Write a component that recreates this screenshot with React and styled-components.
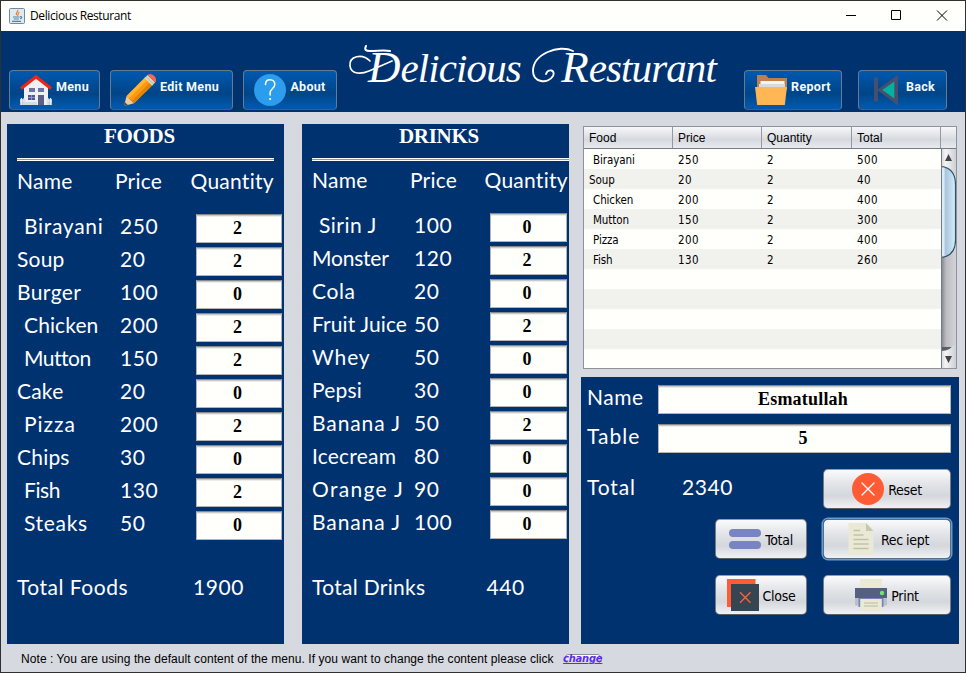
import React from "react";
import styled, { createGlobalStyle, css } from "styled-components";

const navy = "#003270";
const silver = "#d6d9df";

const Global = createGlobalStyle`
  * { box-sizing: border-box; }
  body { margin: 0; overflow: hidden; }
`;

const Window = styled.div`
  width: 966px;
  height: 673px;
  display: flex;
  flex-direction: column;
  background: ${silver};
  border: 1px solid #303030;
  font-family: "Liberation Sans", Arial, sans-serif;
  white-space: pre;
`;

const TitleBar = styled.div`
  height: 30px;
  flex: none;
  display: flex;
  align-items: center;
  padding-left: 8px;
  background: #fffffc;
`;

const WindowTitle = styled.div`
  flex: 1;
  margin-left: 5px;
  padding-bottom: 1px;
  font: 12px "Open Sans", "Noto Sans", sans-serif;
  letter-spacing: -0.4px;
  color: #000;
`;

const WindowControls = styled.div`
  display: flex;
  svg { display: block; }
`;

const Header = styled.header`
  height: 81px;
  flex: none;
  display: flex;
  align-items: flex-end;
  padding: 0 18px 2px 8px;
  background: ${navy};
`;

const NavGroup = styled.nav`
  display: flex;
  gap: ${(p) => p.$gap}px;
`;

const Brand = styled.h1`
  flex: 1;
  position: relative;
  height: 79px;
  margin: 0;
  padding-left: 31px;
  font: italic 41px/72px "Liberation Serif", "Times New Roman", serif;
  letter-spacing: -0.9px;
  color: #fff;
`;

const Initial = styled.span`
  margin-left: ${(p) => p.$before || 0}px;
  font-size: 45px;
  letter-spacing: 0;
`;

const Flourish = styled.svg`
  position: absolute;
  left: 0;
  top: 0;
  fill: none;
  stroke: #fff;
  stroke-linecap: round;
`;

const NavButton = styled.button`
  width: ${(p) => p.$w}px;
  height: 40px;
  display: flex;
  align-items: center;
  justify-content: center;
  gap: 4px;
  padding: 0;
  border: 1px solid #667b8f;
  border-bottom-color: #4c5d72;
  border-radius: 4px;
  background: linear-gradient(#0059b0, #004a93 42%, #004587 60%, #0057ab 92%);
  color: #f4f8fb;
  font: 700 12.5px/16px Roboto, sans-serif;
  letter-spacing: 0.3px;
  svg { display: block; flex: none; }
  span { padding-bottom: 6px; }
`;

const Body = styled.main`
  flex: 1;
  display: flex;
  align-items: flex-start;
  padding: 12px 6px 0;
  height: 532px;
`;

const MenuPanel = styled.section`
  width: ${(p) => p.$w}px;
  height: 520px;
  flex: none;
  margin-right: ${(p) => p.$after}px;
  padding-left: 10px;
  background: ${navy};
  color: #fff;
  font: 21px/28px Lato, sans-serif;
  overflow: hidden;
`;

const PanelHeading = styled.h2`
  height: 34px;
  margin: 0;
  padding-left: ${(p) => p.$left}px;
  font: 700 21px/25px "Liberation Serif", serif;
  letter-spacing: ${(p) => p.$track}px;
`;

const Rule = styled.div`
  width: 257px;
  height: 3px;
  border: solid #fff;
  border-width: 1px 0;
  background: #8f98a7;
`;

const Columns = styled.div`
  display: grid;
  grid-template-columns: 98px ${(p) => p.$price}px 90px;
  height: ${(p) => p.$h}px;
  padding-top: ${(p) => p.$h - 45}px;
`;

const ItemRow = styled.div`
  display: grid;
  grid-template-columns: ${(p) => p.$name}px auto ${(p) => p.$field}px;
  width: ${(p) => p.$w}px;
  height: 33px;
`;

const Label = styled.div`
  padding-left: ${(p) => p.$indent || 0}px;
  letter-spacing: ${(p) => p.$track || 0}px;
`;

const Field = styled.input`
  width: 100%;
  height: 29px;
  margin: 2px 0 0;
  padding: 0 3px 0 0;
  border: 1px solid #b4b4b4;
  border-top-color: #898989;
  border-radius: 0;
  outline: none;
  background: #fffffc;
  box-shadow: inset 0 1px 0 #c8c8c8, inset 0 2px 0 #ededeb;
  text-align: center;
  font: 700 18px "Liberation Serif", "Times New Roman", serif;
  letter-spacing: ${(p) => p.$track || 0}px;
  color: #000;
`;

const Sum = styled.div`
  display: grid;
  grid-template-columns: ${(p) => p.$split}px auto;
  padding-top: ${(p) => p.$top}px;
`;

const SidePanel = styled.div`
  width: 378px;
  padding: 2px 0 0 0;
`;

const OrderTable = styled.div`
  width: 374px;
  height: 243px;
  margin-left: 2px;
  border: 1px solid #8d939d;
  background: #fffffc;
  color: #000;
  font: 11.5px/22px "DejaVu Sans Condensed", "DejaVu Sans", sans-serif;
  font-stretch: condensed;
`;

const HeadRow = styled.div`
  display: grid;
  grid-template-columns: 89px 89px 90px 89px 15px;
  height: 22px;
  border-bottom: 1px solid #747b86;
  background: linear-gradient(#f6f7f9, #dfe1e6 45%, #d6d9df 60%, #e8eaee);
  font: 12px/23px "Liberation Sans", Arial, sans-serif;
`;

const HeadCell = styled.div`
  height: 21px;
  padding-left: 5px;
  border-right: ${(p) => (p.$last ? 0 : 1)}px solid #9398a2;
`;

const TableBody = styled.div`
  display: flex;
  height: 219px;
  overflow: hidden;
`;

const Rows = styled.div`
  width: 357px;
`;

const OrderRow = styled.div`
  display: grid;
  grid-template-columns: 89px 89px 90px 89px;
  height: 20px;
  &:nth-child(even) { background: #f1f1ee; }
`;

const Cell = styled.div`
  height: 20px;
  padding-left: ${(p) => 5 + (p.$indent || 0)}px;
  letter-spacing: ${(p) => (p.$num ? 0.4 : -0.1)}px;
`;

const ScrollBar = styled.svg`
  display: block;
`;

const Checkout = styled.section`
  width: 378px;
  height: 267px;
  margin-top: 8px;
  padding: 6px 8px 0 6px;
  background: ${navy};
  color: #fff;
  font: 21px/28px Lato, sans-serif;
`;

const FormRow = styled.div`
  display: grid;
  grid-template-columns: 71px 293px;
  height: 39px;
`;

const TotalRow = styled.div`
  display: grid;
  grid-template-columns: 95px 141px 128px;
  height: 50px;
  margin-top: 8px;
  & > div { padding-top: 4px; }
`;

const ActionRow = styled.div`
  display: flex;
  justify-content: flex-end;
  gap: 16px;
  height: 56px;
`;

const ActionButton = styled.button`
  width: ${(p) => p.$w}px;
  height: 40px;
  display: flex;
  align-items: center;
  justify-content: center;
  gap: 4px;
  padding: 0;
  border: 1px solid #777c83;
  border-top-color: #979ba2;
  border-bottom-color: #5a5d62;
  border-radius: 5px;
  background: linear-gradient(#fbfbfc, #e3e5e8 35%, #d4d7dc 68%, #f0f1f3);
  color: #000;
  font: 14px/20px "DejaVu Sans Condensed", "DejaVu Sans", sans-serif;
  font-stretch: condensed;
  letter-spacing: -0.3px;
  svg { display: block; flex: none; }
  & > span { padding-top: 2px; }
  ${(p) =>
    p.$focused &&
    css`
      border-color: #5c6f82;
      box-shadow: 0 0 0 1.5px #629cd0;
    `}
`;

const Loose = styled.span`
  letter-spacing: 3px;
`;

const Footer = styled.footer`
  height: 28px;
  display: flex;
  align-items: center;
  padding: 1px 0 0 20px;
  font-size: 12px;
  color: #000;
`;

const Note = styled.span`
  padding-top: 1px;
  letter-spacing: 0.07px;
`;

const ChangeButton = styled.button`
  width: 38px;
  height: 10px;
  margin-left: 10px;
  padding: 0;
  display: flex;
  align-items: center;
  justify-content: center;
  border: 1px solid #8b8e96;
  border-radius: 5px;
  background: linear-gradient(#fff, #d5d8de);
  color: #5a2cf0;
  font: italic 700 11px/12px "DejaVu Sans Condensed", "DejaVu Sans", sans-serif;
  font-stretch: condensed;
  letter-spacing: -0.2px;
  text-decoration: underline;
`;

const Icon = ({ children, ...rest }) => (
  <svg width="32" height="32" viewBox="0 0 32 32" {...rest}>{children}</svg>
);

const JavaIcon = () => (
  <svg width="16" height="16" viewBox="0 0 16 16">
    <rect x="0.5" y="0.5" width="15" height="15" rx="1" fill="#e1e9ef" stroke="#6c8ba2" />
    <path d="M8.7 2c1 1.8-3 2.6-1 5M10.4 4.2C8 5.2 9.8 6 8.5 7.8" fill="none" stroke="#e8822b" strokeWidth="1.2" />
    <path d="M4 9h6.5M4.8 11h5M3 13.4h9M11 8.6c2.4-.4 2.2 1.7 0 2.2" fill="none" stroke="#5481a3" strokeWidth="1.1" />
  </svg>
);

const HouseIcon = () => (
  <Icon>
    <path d="M4 13 16 3l12 10v18H4z" fill="#eef0f1" />
    <path d="M0 25h5v6H0zM27 25h5v6h-5z" fill="#b6c4d2" />
    <path d="M1.5 24v7M4 24v7M28 24v7M30.5 24v7M0 27h5M27 27h5" stroke="#e5edf2" strokeWidth="1.2" />
    <path d="M1 14.500 16 2.800l15 11.700" fill="none" stroke="#f02415" strokeWidth="3.2" />
    <path d="M9 14h6v4H9zM18 14h6v4h-6z" fill="#6b72b3" />
    <path d="M8 21h7v5H8z" fill="#4f569c" />
    <path d="M11.5 21v5M8 23.500h7" stroke="#9aa0d2" strokeWidth=".8" />
    <path d="M18 21h6v10h-6z" fill="#59608a" />
    <path d="M5 28h12v3H5z" fill="#d4dce2" />
  </Icon>
);

const PencilIcon = () => (
  <Icon>
    <path d="M0 32 2.6 22 10 29.2z" fill="#f4c999" />
    <path d="M0 32 .9 28.2 3.8 31z" fill="#3c4654" />
    <path d="M2.6 22 21 3.6l7.6 7.4L10 29.3z" fill="#ff9811" />
    <path d="M2.6 22 21 3.6l2.4 2.3L5 24.4z" fill="#ffb432" />
    <path d="m7.6 26.9 18.5-18.3 2.5 2.4L10 29.3z" fill="#e28300" />
    <path d="m20.5 4.1 3-3 7.6 7.5-3 3z" fill="#d5dfcf" />
    <path d="m22 2.6 7.6 7.4" stroke="#98aaa0" strokeWidth=".8" />
    <path d="M23.5 1.1c2-2 4.8-1 6.8.9s2.6 4.5.8 6.6z" fill="#fa684b" />
  </Icon>
);

const HelpIcon = () => (
  <Icon>
    <circle cx="16" cy="16" r="16" fill="#2c9cec" />
    <path d="M11.5 10.5c0-3 2-4.7 4.6-4.7 2.8 0 4.7 2 4.7 4.6 0 4-4.7 4.2-4.7 8.6v2" fill="none" stroke="#fff" strokeWidth="1.5" strokeLinecap="round" />
    <circle cx="16.1" cy="25" r="1.1" fill="#fff" />
  </Icon>
);

const FolderIcon = () => (
  <Icon>
    <path d="M2 1h9l2.5 3H32v12H2z" fill="#bb804d" />
    <path d="M5.5 7h24v8h-24z" fill="#f3f4f4" />
    <path d="M4 10h26v6H4z" fill="#d8dbdd" />
    <path d="M0 13h32l-2.2 18H2.2z" fill="#ffb655" />
  </Icon>
);

const BackIcon = () => (
  <Icon>
    <path d="M4 3.5h4v24H4zM28 .5v31L7 16z" fill="#464f6d" />
    <path d="M24.3 7.5v17L12.3 16z" fill="#00b3a0" />
  </Icon>
);

const ResetIcon = () => (
  <Icon>
    <circle cx="16" cy="16" r="16" fill="#ff5c36" />
    <path d="m10 10 12 12m0-12L10 22" stroke="#fff" strokeWidth="1.3" strokeLinecap="round" />
  </Icon>
);

const EqualsIcon = () => (
  <Icon>
    <rect y="6" width="32" height="8" rx="4" fill="#7984c3" />
    <rect y="18" width="32" height="8" rx="4" fill="#7984c3" />
  </Icon>
);

const DocumentIcon = () => (
  <Icon>
    <path d="M3.5 0H21l7.5 8v24h-25z" fill="#e9e9d6" />
    <path d="m21 0 7.500 8H21z" fill="#c8c7ae" />
    <path d="M8.5 7.500H15M8.500 12h10M8.500 16.500h15M8.500 21h15M8.500 25.500h15" stroke="#c3c2a4" strokeWidth="1.3" />
  </Icon>
);

const CloseIcon = () => (
  <Icon>
    <path d="M0 0h28.5v28H0z" fill="#ff5c35" />
    <path d="M4 5h28v27H4z" fill="#354551" />
    <path d="m13 13.2 10.5 10.6m0-10.6L13 23.8" stroke="#ff623b" strokeWidth="1.3" />
  </Icon>
);

const PrinterIcon = () => (
  <Icon>
    <path d="M5 0h22v10H5z" fill="#e9e9d6" />
    <path d="M0 18h4v8.5H0zM28 18h4v8.5h-4z" fill="#bac0c8" />
    <path d="M0 9h32v10H0z" fill="#555f80" />
    <path d="M3.5 19h25v9h-25z" fill="#7782bf" />
    <path d="M5.2 20h21.600v12H5.2z" fill="#e9e9d6" />
    <path d="M9 24h14M9 27h14" stroke="#bcbb9f" strokeWidth="1.1" />
    <circle cx="27" cy="14" r="2.2" fill="#70e969" />
  </Icon>
);

const foods = [
  { name: "Birayani", cost: 250, qty: 2, indent: 7, track: 0.7 },
  { name: "Soup", cost: 20, qty: 2 },
  { name: "Burger", cost: 100, qty: 0, track: 0.4 },
  { name: "Chicken", cost: 200, qty: 2, indent: 7, track: 0.1 },
  { name: "Mutton", cost: 150, qty: 2, indent: 7, track: -0.5 },
  { name: "Cake", cost: 20, qty: 0 },
  { name: "Pizza", cost: 200, qty: 2, indent: 7, track: 1 },
  { name: "Chips", cost: 30, qty: 0 },
  { name: "Fish", cost: 130, qty: 2, indent: 7, track: -0.4 },
  { name: "Steaks", cost: 50, qty: 0, indent: 7, track: 0.7 },
];

const drinks = [
  { name: "Sirin J", cost: 100, qty: 0, indent: 7, track: 0.5 },
  { name: "Monster", cost: 120, qty: 2, track: -0.2 },
  { name: "Cola", cost: 20, qty: 0, track: 0.6 },
  { name: "Fruit Juice", cost: 50, qty: 2, track: 0.1 },
  { name: "Whey", cost: 50, qty: 0, track: 0.9 },
  { name: "Pepsi", cost: 30, qty: 0 },
  { name: "Banana J", cost: 50, qty: 2, track: 0.9 },
  { name: "Icecream", cost: 80, qty: 0 },
  { name: "Orange J", cost: 90, qty: 0, track: 1.3 },
  { name: "Banana J", cost: 100, qty: 0, track: 0.9 },
];

const orders = [
  ["Birayani", 250, 2, 500, 4],
  ["Soup", 20, 2, 40],
  ["Chicken", 200, 2, 400, 4],
  ["Mutton", 150, 2, 300, 4],
  ["Pizza", 200, 2, 400, 4],
  ["Fish", 130, 2, 260, 4],
  [], [], [], [], [],
];

function MenuList({ title, track, width, after, price, nameWidth, rowWidth, field, items, headHeight, sumLabel, sumTrack, sumTop, sum, split }) {
  return (
    <MenuPanel $w={width} $after={after}>
      <PanelHeading $left={87} $track={track}>{title}</PanelHeading>
      <Rule />
      <Columns $price={price} $h={headHeight}>
        <Label $track={0.3}>Name</Label>
        <Label $track={0.2}>Price</Label>
        <Label $track={0.25}>Quantity</Label>
      </Columns>
      {items.map((item, i) => (
        <ItemRow key={i} $name={nameWidth} $w={rowWidth} $field={field}>
          <Label $indent={item.indent} $track={item.track ?? 0.2}>{item.name}</Label>
          <Label $track={0.6}>{item.cost}</Label>
          <Field defaultValue={item.qty} />
        </ItemRow>
      ))}
      <Sum $split={split} $top={sumTop}>
        <Label $track={sumTrack}>{sumLabel}</Label>
        <Label $track={0.6}>{sum}</Label>
      </Sum>
    </MenuPanel>
  );
}

function VerticalScroll() {
  return (
    <ScrollBar width="15" height="219" viewBox="0 0 15 219">
      <defs>
        <linearGradient id="track"><stop stopColor="#7d8087" /><stop offset=".35" stopColor="#bcbec3" /><stop offset="1" stopColor="#d2d3d7" /></linearGradient>
        <linearGradient id="cap"><stop stopColor="#d0d2d6" /><stop offset=".3" stopColor="#f3f4f5" /><stop offset="1" stopColor="#cdd0d5" /></linearGradient>
        <linearGradient id="thumb"><stop stopColor="#d6e9f5" /><stop offset=".2" stopColor="#dcebf7" /><stop offset=".3" stopColor="#a8c5dc" /><stop offset=".8" stopColor="#c7e1f1" /><stop offset="1" stopColor="#def2fb" /></linearGradient>
      </defs>
      <rect width="15" height="219" fill="url(#track)" />
      <path d="M0 0h15v27Q12 18 0 17z" fill="url(#cap)" />
      <path d="M0 198h11l-3 4H0z" fill="#5a5d63" />
      <path d="M0 202q10 0 15-9v26H0z" fill="url(#cap)" />
      <path d="M0 17.5Q14.5 19 14.5 36v55Q14.5 107 0 108.5z" fill="url(#thumb)" stroke="#2e5269" strokeWidth="1.2" />
      <path d="M.5 0v219" stroke="#777b82" />
      <path d="m7.500 5 3.500 7H4zM7.500 214 4 207h7z" fill="#444" />
    </ScrollBar>
  );
}

export default function App() {
  return (
    <>
      <Global />
      <Window>
        <TitleBar>
          <JavaIcon />
          <WindowTitle>Delicious Resturant</WindowTitle>
          <WindowControls>
            <svg width="120" height="30" viewBox="0 0 120 30" fill="none" stroke="#000">
              <path d="M1 14.500h10M46.500 9.500h9v9h-9zM92 9.500l10 10M102 9.500l-10 10" />
            </svg>
          </WindowControls>
        </TitleBar>
        <Header>
          <NavGroup $gap={10}>
            <NavButton $w={91}><HouseIcon /><span>Menu</span></NavButton>
            <NavButton $w={123}><PencilIcon /><span>Edit Menu</span></NavButton>
            <NavButton $w={94}><HelpIcon /><span>About</span></NavButton>
          </NavGroup>
          <Brand>
            <Initial>D</Initial>elicious <Initial $before={31}>R</Initial>esturant
            <Flourish width="400" height="79" viewBox="0 0 400 79">
              <path d="M29 15c-2 4 0 5 4 5 8 0 14-1 20 0" strokeWidth="2" />
              <path d="M33 30c-8-8-21-5-20 5 1 9 12 8 19 5l23-10" strokeWidth="1.7" />
              <path d="M236 20c-14-7-40 3-40 20 0 12 15 13 20 5 3-6-5-8-7-2" strokeWidth="1.9" />
            </Flourish>
          </Brand>
          <NavGroup $gap={16}>
            <NavButton $w={98}><FolderIcon /><span>Report</span></NavButton>
            <NavButton $w={89}><BackIcon /><span>Back</span></NavButton>
          </NavGroup>
        </Header>
        <Body>
          <MenuList title="FOODS" track={-0.3} width={277} after={18} price={75.5} nameWidth={103} rowWidth={265} field={86}
            items={foods} headHeight={51} sumLabel="Total Foods" sumTrack={0.5} sumTop={31} sum="1900" split={176} />
          <MenuList title="DRINKS" track={-0.3} width={267} after={12} price={74.5} nameWidth={102} rowWidth={255} field={77}
            items={drinks} headHeight={50} sumLabel="Total Drinks" sumTrack={0.3} sumTop={32} sum="440" split={174.5} />
          <SidePanel>
            <OrderTable>
              <HeadRow>
                <HeadCell>Food</HeadCell>
                <HeadCell>Price</HeadCell>
                <HeadCell>Quantity</HeadCell>
                <HeadCell>Total</HeadCell>
                <HeadCell $last />
              </HeadRow>
              <TableBody>
                <Rows>
                  {orders.map(([food, price, qty, total, indent], i) => (
                    <OrderRow key={i}>
                      <Cell $indent={indent}>{food}</Cell>
                      <Cell $num>{price}</Cell>
                      <Cell $num>{qty}</Cell>
                      <Cell $num>{total}</Cell>
                    </OrderRow>
                  ))}
                </Rows>
                <VerticalScroll />
              </TableBody>
            </OrderTable>
            <Checkout>
              <FormRow><Label $track={0.5}>Name</Label><Field defaultValue="Esmatullah" $track={0.2} /></FormRow>
              <FormRow><Label $track={1}>Table</Label><Field defaultValue="5" /></FormRow>
              <TotalRow>
                <Label $track={0.9}>Total</Label>
                <Label $track={0.6}>2340</Label>
                <ActionButton $w={128}><ResetIcon /><span>Reset</span></ActionButton>
              </TotalRow>
              <ActionRow>
                <ActionButton $w={92}><EqualsIcon /><span>Total</span></ActionButton>
                <ActionButton $w={128} $focused><DocumentIcon /><span>Re<Loose>c</Loose>iept</span></ActionButton>
              </ActionRow>
              <ActionRow>
                <ActionButton $w={92}><CloseIcon /><span>Close</span></ActionButton>
                <ActionButton $w={128}><PrinterIcon /><span>Print</span></ActionButton>
              </ActionRow>
            </Checkout>
          </SidePanel>
        </Body>
        <Footer>
          <Note>Note : You are using the default content of the menu. If you want to change the content please click</Note>
          <ChangeButton>change</ChangeButton>
        </Footer>
      </Window>
    </>
  );
}
